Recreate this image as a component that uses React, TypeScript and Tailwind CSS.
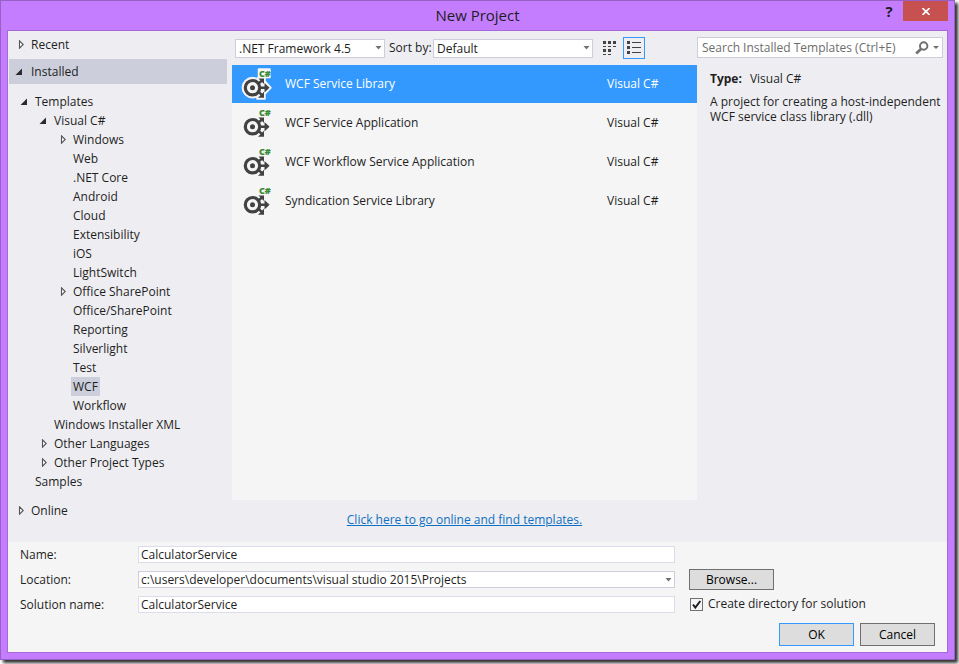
import React, { useState } from "react";

type Arrow = "open" | "closed" | "none";

function TreeArrow({ state }: { state: Arrow }) {
  return (
    <svg width="8" height="9" viewBox="0 0 8 9" aria-hidden="true" className="shrink-0">
      {state === "open" && <path d="M7 1.5V8H0.5z" fill="#2b2b2e" />}
      {state === "closed" && (
        <path d="M3.5 0.8V8.2L7.2 4.5z" fill="#fafafa" stroke="#555558" strokeWidth="1.1" />
      )}
    </svg>
  );
}

function ComboArrow() {
  return (
    <svg
      width="7"
      height="4"
      viewBox="0 0 7 4"
      aria-hidden="true"
      className="pointer-events-none absolute top-1/2 right-[3px] -translate-y-1/2"
    >
      <path d="M0.500 0h6L3.500 3.400z" fill="#717171" />
    </svg>
  );
}

function ServiceShapes() {
  return (
    <>
      <circle cx="11.5" cy="20.7" r="7.2" fill="none" strokeWidth="3.2" />
      <circle cx="11.5" cy="20.7" r="2.5" stroke="none" />
      <path d="M18 20.700h6M17.500 16.500L21 13.500M17.500 25L21 28" fill="none" strokeWidth="2.400" />
      <path d="M23.500 16L28.600 20.700L23.500 25.400z" stroke="none" />
      <path d="M17.500 11.500H23V17z" stroke="none" />
      <path d="M23 24.800V30.800H17z" stroke="none" />
    </>
  );
}

function ServiceIcon({ selected }: { selected: boolean }) {
  return (
    <svg width="32" height="34" viewBox="0 0 32 34" aria-hidden="true" className="shrink-0">
      {selected && (
        <g fill="#f5f5f5" stroke="#f5f5f5" strokeLinejoin="round">
          <circle cx="11.5" cy="20.7" r="10.400" />
          <path d="M17.500 2H29V10.500H24V14L30 20.700L24 27V32H16V12L17.500 10z" strokeWidth="1.500" />
        </g>
      )}
      <g fill="#424242" stroke="#424242">
        <ServiceShapes />
      </g>
      <text x="18" y="10" fill="#388a34" className="font-['Open_Sans',sans-serif] text-[9px] font-extrabold">
        C#
      </text>
    </svg>
  );
}

type Node = { label: string; pad: string; arrow: Arrow };

const nodes: Node[] = [
  { label: "Templates", pad: "pl-[12px]", arrow: "open" },
  { label: "Visual C#", pad: "pl-[31px]", arrow: "open" },
  { label: "Windows", pad: "pl-[50px]", arrow: "closed" },
  { label: "Web", pad: "pl-[50px]", arrow: "none" },
  { label: ".NET Core", pad: "pl-[50px]", arrow: "none" },
  { label: "Android", pad: "pl-[50px]", arrow: "none" },
  { label: "Cloud", pad: "pl-[50px]", arrow: "none" },
  { label: "Extensibility", pad: "pl-[50px]", arrow: "none" },
  { label: "iOS", pad: "pl-[50px]", arrow: "none" },
  { label: "LightSwitch", pad: "pl-[50px]", arrow: "none" },
  { label: "Office SharePoint", pad: "pl-[50px]", arrow: "closed" },
  { label: "Office/SharePoint", pad: "pl-[50px]", arrow: "none" },
  { label: "Reporting", pad: "pl-[50px]", arrow: "none" },
  { label: "Silverlight", pad: "pl-[50px]", arrow: "none" },
  { label: "Test", pad: "pl-[50px]", arrow: "none" },
  { label: "WCF", pad: "pl-[50px]", arrow: "none" },
  { label: "Workflow", pad: "pl-[50px]", arrow: "none" },
  { label: "Windows Installer XML", pad: "pl-[31px]", arrow: "none" },
  { label: "Other Languages", pad: "pl-[31px]", arrow: "closed" },
  { label: "Other Project Types", pad: "pl-[31px]", arrow: "closed" },
  { label: "Samples", pad: "pl-[12px]", arrow: "none" },
];

const templates = [
  "WCF Service Library",
  "WCF Service Application",
  "WCF Workflow Service Application",
  "Syndication Service Library",
];

function Section({ label, arrow, active }: { label: string; arrow: Arrow; active?: boolean }) {
  return (
    <button
      type="button"
      className={
        active
          ? "ml-px mr-[5px] flex h-[25px] items-center gap-[8px] bg-[#cccedb] pl-[6px]"
          : "ml-px mr-[5px] flex h-[25px] items-center gap-[7px] pl-[7px]"
      }
    >
      <TreeArrow state={arrow} />
      {label}
    </button>
  );
}

function Sidebar() {
  const [current, setCurrent] = useState("WCF");
  return (
    <nav className="flex w-[224px] shrink-0 flex-col pt-px">
      <Section label="Recent" arrow="closed" />
      <div className="h-[2px]" />
      <Section label="Installed" arrow="open" active />
      <ul className="mt-[8px]">
        {nodes.map((n) => (
          <li key={n.label} className={n.pad}>
            <button
              type="button"
              onClick={() => setCurrent(n.label)}
              className="flex h-[19px] items-center gap-[5px] whitespace-nowrap"
            >
              <TreeArrow state={n.arrow} />
              <span
                className={
                  n.label === current
                    ? "h-[19px] bg-[#cccedb] px-[2px] leading-[19px]"
                    : "h-[19px] px-[2px] leading-[19px]"
                }
              >
                {n.label}
              </span>
            </button>
          </li>
        ))}
      </ul>
      <div className="h-[7px]" />
      <Section label="Online" arrow="closed" />
    </nav>
  );
}

function Toolbar() {
  return (
    <div className="flex h-[34px] items-center pl-[3px]">
      <div className="relative w-[150px] shrink-0">
        <select
          aria-label="Target framework"
          className="block h-[19px] w-full appearance-none border border-[#cccedb] bg-white pl-[3px] leading-[17px]"
        >
          <option>.NET Framework 4.5</option>
        </select>
        <ComboArrow />
      </div>
      <label htmlFor="sort" className="w-[48px] shrink-0 pl-[4px] whitespace-nowrap">
        Sort by:
      </label>
      <div className="relative w-[160px] shrink-0">
        <select
          id="sort"
          className="block h-[19px] w-full appearance-none border border-[#cccedb] bg-white pl-[3px] leading-[17px]"
        >
          <option>Default</option>
        </select>
        <ComboArrow />
      </div>
      <button type="button" aria-label="Small icons" className="flex h-[22px] w-[30px] shrink-0 items-center pl-[9px]">
        <svg width="15" height="15" viewBox="0 0 15 15" shapeRendering="crispEdges" fill="#424242">
          <path d="M1 0h3v3h-3zM6 0h3v3h-3zM11 0h3v3h-3zM1 5h3v1h-3zM6 5h3v1h-3zM11 5h3v1h-3zM1 8h3v3h-3zM6 8h3v3h-3zM1 13h3v1h-3zM6 13h3v1h-3z" />
        </svg>
      </button>
      <button
        type="button"
        aria-label="Medium icons"
        className="flex h-[22px] w-[22px] shrink-0 items-center justify-center border border-[#3399ff]"
      >
        <svg width="14" height="14" viewBox="0 0 14 14" shapeRendering="crispEdges" fill="#424242">
          <path d="M0 0h3v3h-3zM0 5h3v3h-3zM0 10h3v3h-3zM5 1h9v1h-9zM5 6h9v1h-9zM5 11h9v1h-9z" />
        </svg>
      </button>
    </div>
  );
}

function TemplateList() {
  const [selected, setSelected] = useState(0);
  return (
    <ul className="flex h-[435px] flex-col gap-px bg-[#f5f5f5]">
      {templates.map((t, i) => (
        <li key={t}>
          <button
            type="button"
            onClick={() => setSelected(i)}
            className={
              i === selected
                ? "flex h-[38px] w-full items-center bg-[#3399ff] pl-[9px] text-left text-white"
                : "flex h-[38px] w-full items-center pl-[9px] text-left"
            }
          >
            <ServiceIcon selected={i === selected} />
            <span className="flex-1 pl-[12px]">{t}</span>
            <span className="w-[90px]">Visual C#</span>
          </button>
        </li>
      ))}
    </ul>
  );
}

function Details() {
  return (
    <aside className="w-[250px] shrink-0">
      <label className="mt-[6px] mr-[4px] flex h-[21px] items-center border border-[#cccedb] bg-white pr-[3px] pl-[4px]">
        <input
          type="text"
          aria-label="Search Installed Templates"
          placeholder="Search Installed Templates (Ctrl+E)"
          className="min-w-0 flex-1 outline-none placeholder:text-[#6d6d6d]"
        />
        <svg width="14" height="14" viewBox="0 0 14 14" aria-hidden="true" className="shrink-0">
          <circle cx="8.700" cy="5" r="3.700" fill="none" stroke="#717171" strokeWidth="2" />
          <path d="M6.200 7.800L1.200 12.500" stroke="#717171" strokeWidth="2.800" />
        </svg>
        <svg width="6" height="3" viewBox="0 0 6 3" aria-hidden="true" className="ml-[4px] shrink-0">
          <path d="M0 0h6L3 3z" fill="#717171" />
        </svg>
      </label>
      <div className="pt-[12px] pr-[4px] pl-[13px]">
        <p className="flex gap-[8px] leading-[18px]">
          <b>Type:</b>
          <span>Visual C#</span>
        </p>
        <p className="mt-[6px] leading-[15px]">
          A project for creating a host-independent WCF service class library (.dll)
        </p>
      </div>
    </aside>
  );
}

function FieldsForm() {
  const [name, setName] = useState("CalculatorService");
  const [solution, setSolution] = useState("CalculatorService");
  return (
    <form
      onSubmit={(e) => e.preventDefault()}
      className="bg-[#f5f5f5] pr-[12px] pb-[6px] pl-[12px] text-[#1e1e1e]"
    >
      <div className="flex gap-[14px]">
        <div className="grid flex-1 grid-cols-[118px_1fr] items-center">
          <label htmlFor="name" className="leading-[25px]">
            Name:
          </label>
          <input
            id="name"
            value={name}
            onChange={(e) => setName(e.target.value)}
            className="h-[17px] w-full border border-[#dcdcea] bg-white px-[2px]"
          />
          <label htmlFor="location" className="leading-[25px]">
            Location:
          </label>
          <div className="relative">
            <select
              id="location"
              className="block h-[17px] w-full appearance-none border border-[#cccedb] bg-white px-[2px] leading-[15px]"
            >
              <option>c:\users\developer\documents\visual studio 2015\Projects</option>
            </select>
            <ComboArrow />
          </div>
          <label htmlFor="solution" className="leading-[25px]">
            Solution name:
          </label>
          <input
            id="solution"
            value={solution}
            onChange={(e) => setSolution(e.target.value)}
            className="h-[17px] w-full border border-[#dcdcea] bg-white px-[2px]"
          />
        </div>
        <div className="flex w-[246px] shrink-0 flex-col items-start pt-[27px]">
          <button type="button" className="h-[21px] w-[85px] border border-[#707070] bg-[#dddddd] text-black">
            Browse...
          </button>
          <label className="mt-[6px] flex items-center gap-[5px] pl-px leading-[16px]">
            <span className="relative flex">
              <input
                type="checkbox"
                defaultChecked
                className="peer h-[13px] w-[13px] appearance-none border border-[#717171] bg-[#f5f5f8]"
              />
              <svg
                width="13"
                height="13"
                viewBox="0 0 13 13"
                aria-hidden="true"
                className="pointer-events-none invisible absolute inset-0 peer-checked:visible"
              >
                <path d="M3 6.500L5.300 9.500L10.300 3" fill="none" stroke="#1e1e1e" strokeWidth="2" />
              </svg>
            </span>
            Create directory for solution
          </label>
        </div>
      </div>
      <div className="mt-[6px] flex justify-end gap-[6px] text-black">
        <button type="submit" className="h-[23px] w-[75px] border border-[#3399ff] bg-[#dddddd]">
          OK
        </button>
        <button type="button" className="h-[23px] w-[75px] border border-[#707070] bg-[#dddddd]">
          Cancel
        </button>
      </div>
    </form>
  );
}

export default function App() {
  return (
    <div className="bg-white pr-[4px] pb-[4px] font-['Open_Sans','Noto_Sans',sans-serif] text-[12px] leading-[16px] text-[#1e1e1e]">
      <div className="border border-[#9660c4] bg-[#c47dff] px-[6px] pb-[6px] shadow-[3px_3px_3px_#333333]">
        <header className="flex h-[29px] items-start">
          <div className="w-[73px]" />
          <h1 className="flex-1 text-center text-[15px] leading-[29px]">New Project</h1>
          <button type="button" aria-label="Help" className="h-[20px] w-[28px] text-[15px] leading-[21px] font-bold">
            ?
          </button>
          <button
            type="button"
            aria-label="Close"
            className="flex h-[20px] w-[45px] items-center justify-center bg-[#c75050]"
          >
            <svg width="8" height="7" viewBox="0 0 8 7" aria-hidden="true">
              <path d="M0.500 0L7.500 7M7.500 0L0.500 7" stroke="#ffffff" strokeWidth="1.600" />
            </svg>
          </button>
        </header>
        <main className="border border-[#a768d8] bg-[#eeeef2]">
          <div className="flex h-[511px]">
            <Sidebar />
            <section className="min-w-0 flex-1">
              <Toolbar />
              <TemplateList />
              <p className="pt-[12px] text-center">
                <a href="#online" className="text-[#0e70c0] underline">
                  Click here to go online and find templates.
                </a>
              </p>
            </section>
            <Details />
          </div>
          <FieldsForm />
        </main>
      </div>
    </div>
  );
}
